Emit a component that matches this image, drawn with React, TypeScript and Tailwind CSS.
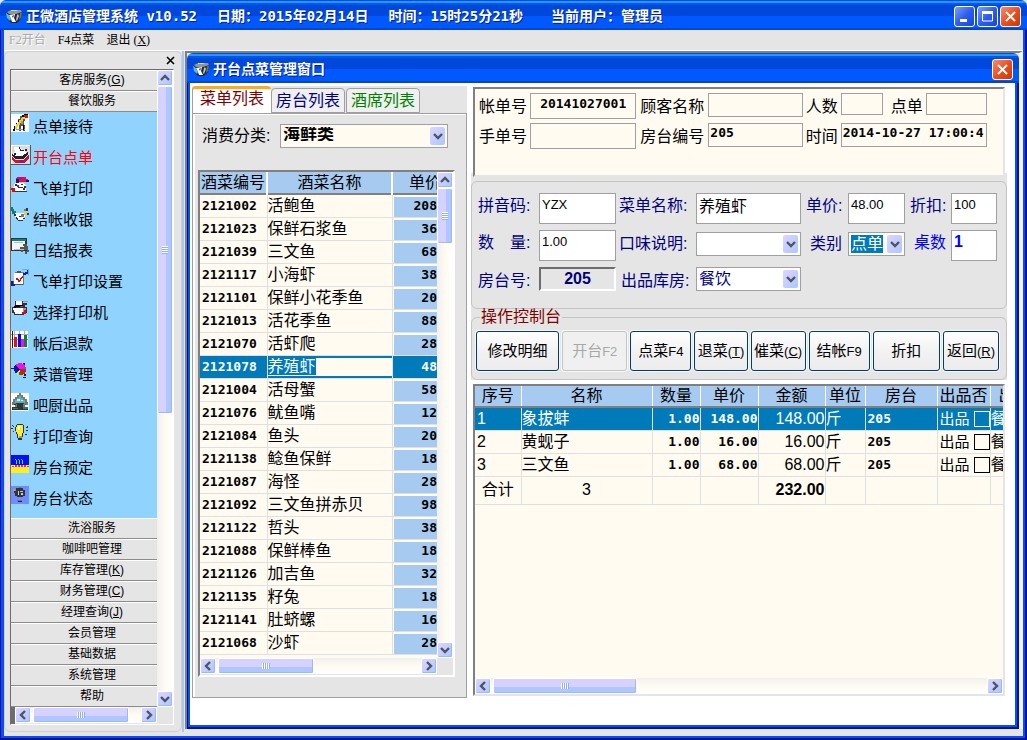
import type { ReactNode } from "react";
import clsx from "clsx";

type Dish = { code: string; name: string; price: string };
type OrderLine = { no: number; name: string; qty: string; price: string; amount: string };

const DISHES: Dish[] = [
  { code: "2121002", name: "活鲍鱼", price: "208" },
  { code: "2121023", name: "保鲜石浆鱼", price: "36" },
  { code: "2121039", name: "三文鱼", price: "68" },
  { code: "2121117", name: "小海虾", price: "38" },
  { code: "2121101", name: "保鲜小花季鱼", price: "20" },
  { code: "2121013", name: "活花季鱼", price: "88" },
  { code: "2121070", name: "活虾爬", price: "28" },
  { code: "2121078", name: "养殖虾", price: "48" },
  { code: "2121004", name: "活母蟹", price: "58" },
  { code: "2121076", name: "鱿鱼嘴", price: "12" },
  { code: "2121084", name: "鱼头", price: "20" },
  { code: "2121138", name: "鲶鱼保鲜", price: "18" },
  { code: "2121087", name: "海怪", price: "28" },
  { code: "2121092", name: "三文鱼拼赤贝", price: "98" },
  { code: "2121122", name: "哲头", price: "38" },
  { code: "2121088", name: "保鲜棒鱼", price: "18" },
  { code: "2121126", name: "加吉鱼", price: "32" },
  { code: "2121135", name: "籽兔", price: "18" },
  { code: "2121141", name: "肚蛴螺", price: "16" },
  { code: "2121068", name: "沙虾", price: "28" },
];

const ORDER: OrderLine[] = [
  { no: 1, name: "象拔蚌", qty: "1.00", price: "148.00", amount: "148.00" },
  { no: 2, name: "黄蚬子", qty: "1.00", price: "16.00", amount: "16.00" },
  { no: 3, name: "三文鱼", qty: "1.00", price: "68.00", amount: "68.00" },
];

const SELECTED_CODE = "2121078";

const ICONS: Record<string, ReactNode> = {
  waiter: (
    <>
      <path fill="#fff" d="M0 0h18v18H0z" />
      <path fill="#555" d="M9 2h3v2h2v3h-1v4h1v6h-2v-5h-2v5H8v-6h1V7H7V5h2z" />
      <path fill="#999" d="M10 5h2v5h-2zM5 15h9v1H5z" />
      <path fill="#000" d="M13 0h4v1h-4zM11 1h2v2h-2zM7 6h1v2H7zM5 9h1v2H5zM3 12h1v3H3zM2 15h2v2H2zM12 11h1v5h-1z" />
      <path fill="#f4d020" d="M11 3h3v2h-2v2h-2v2H9v2H7v2H6v2H4v-3h1v-2h2V8h1V6h2V4h1z" />
      <path fill="#e01010" d="M13 1h4v3h-3V3h-1z" />
    </>
  ),
  order: (
    <>
      <path fill="#dcdcdc" d="M0 0h20v20H0z" />
      <path fill="#fff" d="M0 0h20v1H0zM0 0h1v20H0z" />
      <path fill="#555" d="M19 0h1v20h-1zM0 19h20v1H0z" />
      <path fill="#fff" d="M3 2h5l3 3h3l1 3-4 4H4L1 9l3-2z" />
      <path fill="#222" d="M8 2h1l1 3h3v1H9zM3 8h2v2H3zM14 4h2v2h-2zM5 11h6l6-4v3l-5 4H4l-3-3V9z" />
      <path fill="#9a1090" d="M1 12l4 3h7l6-5v3l-5 5H5l-4-3z" />
      <path fill="#e01020" d="M1 13l4 2h4v3H5l-4-3zM12 15l5-4v3l-4 3z" />
      <path fill="#fff" d="M6 8h5v1H6zM7 10h3v1H7z" />
    </>
  ),
  courier: (
    <>
      <path fill="#e01050" d="M6 1h9v2h2v3H8V4H5V2z" />
      <path fill="#b01090" d="M8 1h4v2H8z" />
      <path fill="#102070" d="M5 3h3v4H5zM15 4h3v2h-3z" />
      <path fill="#fff" d="M4 7h8l3 3v6H5l-3-3z" />
      <path fill="#333" d="M4 8h2v2H4zM10 8h2v1h-2zM7 11h5v1H7zM13 10h2v2h-2zM4 15h12v1H4zM12 12h2v2h-2z" />
      <path fill="#d01010" d="M0 12h4v4H1zM6 9h2v2H6z" />
    </>
  ),
  cash: (
    <>
      <path fill="#0a7f80" d="M0 0h2v2h1v2h2v2h1v3H3V7H1V4H0z" />
      <path fill="#fff" d="M4 6h10v3l-2 4H7L4 10z" />
      <path fill="#333" d="M3 7h2v2H3zM5 10h1v1h1v2H6zM7 13h5v1H7zM12 11h2v1h-2zM8 9h2v1H8z" />
      <path fill="#777" d="M10 7h3v3h-3zM13 2h2v4h-2z" />
      <path fill="#e8d030" d="M13 4h3v4h-3z" />
      <path fill="#20308c" d="M15 1h2v3h-2zM16 6h2v2h-2z" />
    </>
  ),
  report: (
    <>
      <path fill="#333" d="M0 0h16v13H0z" />
      <path fill="#108080" d="M1 1h14v2H1z" />
      <path fill="#f4f4f4" d="M1 3h13v9H1z" />
      <path fill="#bbb" d="M3 4h9v1H3zM3 11h11v1H3z" />
      <path fill="#555" d="M9 9h5v2H9zM12 6h4v2h-4zM13 8h4v4h-4zM10 12h2v2h-2zM14 13h2v3h-2zM16 12h2v2h-2z" />
    </>
  ),
  setting: (
    <>
      <path fill="#777" d="M4 3h9v13H4z" />
      <path fill="#fff" d="M3 4h9v11H3z" />
      <path fill="#555" d="M6 2h4v2H6zM3 15h9v1H3zM2 12h1v3H2z" />
      <path fill="#d01010" d="M5 9h2v1h1v1h1V9h1V8h1V7h1v2h-1v1h-1v2H9v1H7v-2H5z" />
      <path fill="#102090" d="M12 4h2V3h2V1h2v2h-1v2h-2v1h-3zM0 12h2v3h2v2H0z" />
      <path fill="#6ba8ff" d="M11 0h7v1h-7zM17 0h1v6h-1z" />
    </>
  ),
  printer: (
    <>
      <path fill="#333" d="M4 1h8v2h4v2h-2v2h2v6h-3v2H3v-2H1V7h3z" />
      <path fill="#fff" d="M5 1h6v4H5zM2 8h10v4H3zM4 12h7v2H4z" />
      <path fill="#999" d="M12 8h3v4h-3zM12 1h5v1h-5z" />
      <path fill="#000" d="M4 5h8v2H4zM3 6h2v2H3z" />
      <path fill="#d010a0" d="M9 6h3v1H9z" />
      <path fill="#d01020" d="M11 12h4v2h-4zM13 10h2v2h-2z" />
    </>
  ),
  bars: (
    <>
      <path fill="#fff" d="M0 0h17v17H0z" />
      <path fill="#aaa" d="M0 3h17v1H0zM3 0h1v6H3zM8 0h1v3H8zM13 0h1v4h-1zM0 8h17v1H0z" />
      <path fill="#222" d="M1 0h1v17H1z" />
      <path fill="#e81010" d="M3 6h3v10H3z" />
      <path fill="#0010e8" d="M7 3h3v13H7z" />
      <path fill="#f010f0" d="M10 8h3v8h-3z" />
      <path fill="#108030" d="M13 4h3v12h-3z" />
    </>
  ),
  pie: (
    <>
      <circle cx="9" cy="7" r="6" fill="#f010f0" />
      <path fill="#0010e0" d="M9 7L4 3a6 6 0 0 0-1 5l2 4z" />
      <path fill="#f0e010" d="M9 7l-4 5 2 1h3z" />
      <path fill="#e01020" d="M9 7l2 6a6 6 0 0 0 4-4z" />
      <path fill="#108020" d="M9 7l-1 6h3zM9 7l6 2V7z" />
      <path fill="#222" d="M0 6h4v1H0zM4 3h1v1h1v1h1v1h1v1H6V6H5V5H4zM12 1h2v2h-1zM13 12h2v2h-2zM12 15h3v1h-3z" />
    </>
  ),
  kitchen: (
    <>
      <path fill="#fff" d="M0 0h18v18H0z" />
      <path fill="#777" d="M8 0h2v2h2v2h2v2h2v3h1v3h-3v2H4v-2H1V9h1V6h2V4h2V2h2z" />
      <path fill="#58b4b8" d="M8 3h2v2h2v2h2v3H4V7h2V5h2z" />
      <path fill="#c8f0f0" d="M6 6h3v2H6zM10 7h2v1h-2z" />
      <path fill="#333" d="M5 10h8v1H5zM6 11h6v3H6zM1 14h16v3H1zM3 11h2v1H3z" />
      <path fill="#108080" d="M2 15h5v1H2zM12 14h5v2h-5z" />
    </>
  ),
  bulb: (
    <>
      <path fill="#333" d="M6 0h6v1H6zM5 1h1v2H5zM12 1h1v8h-1zM4 3h1v4H4zM5 7h1v3H5zM6 10h1v4H6zM11 9h1v4h-1zM7 14h4v2H7zM1 1h1v1h1v1H2V2H1zM2 7h1v1H2zM0 4h2v1H0zM15 3h1V2h1v2h-2zM15 6h2v1h-2zM14 10h2v1h-2z" />
      <path fill="#f8f020" d="M6 1h6v7l-1 2v3H7v-3L5 7V3h1z" />
      <path fill="#fff" d="M7 2h2v4H7z" />
      <path fill="#999" d="M8 12h3v2H8z" />
    </>
  ),
  banquet: (
    <>
      <path fill="#0010f0" d="M0 0h18v10H0z" />
      <path fill="#f8f020" d="M0 10h18v8H0z" />
      <path fill="#50e0ff" d="M5 5h1v4H5zM8 5h1v4H8zM11 5h1v4h-1zM4 4h1v1H4zM7 4h1v1H7zM10 4h1v1h-1z" />
      <path fill="#f010c0" d="M1 11h2v1H1zM4 10h2v2H4zM7 10h2v2H7zM10 10h2v2h-2zM13 10h2v2h-2zM16 11h2v1h-2z" />
    </>
  ),
  pot: (
    <>
      <path fill="#6c8cff" d="M0 0h18v18H0z" />
      <path fill="#333" d="M5 2h7v2h2v6h-2v1H6v-1H4V7H3V5h2z" />
      <path fill="#ccc" d="M7 5h1v4H7zM9 5h3v1H9zM10 7h2v2h-2z" />
      <path fill="#e0a020" d="M2 3h2v2H2z" />
      <path fill="#777" d="M8 1h2v1H8zM6 14h5v1H6z" />
      <path fill="#222" d="M7 15h4v1H7z" />
    </>
  ),
};

const MENU_ITEMS = [
  { icon: "waiter", label: "点单接待" },
  { icon: "order", label: "开台点单", active: true },
  { icon: "courier", label: "飞单打印" },
  { icon: "cash", label: "结帐收银" },
  { icon: "report", label: "日结报表" },
  { icon: "setting", label: "飞单打印设置" },
  { icon: "printer", label: "选择打印机" },
  { icon: "bars", label: "帐后退款" },
  { icon: "pie", label: "菜谱管理" },
  { icon: "kitchen", label: "吧厨出品" },
  { icon: "bulb", label: "打印查询" },
  { icon: "banquet", label: "房台预定" },
  { icon: "pot", label: "房台状态" },
];

function Logo() {
  return (
    <svg width="16" height="16" viewBox="0 0 16 16" className="shrink-0" aria-hidden="true">
      <path d="M1 4l4-2h10l1 3-1 6-4 4H5l-3-3z" fill="#23282c" />
      <path d="M1 4l4-2h10l1 2-6 2H3z" fill="#8d979e" />
      <path d="M5 2h7l-2 1H5z" fill="#d4dadd" />
      <path d="M3 7l6-1-1 4 2 4H6l-1-3z" fill="#fff" />
      <path d="M0 5l3 2 2 4-1 2-3-3z" fill="#58b8e0" />
      <path d="M6 8l2-1-1 3z" fill="#23282c" />
      <path d="M11 7l1-1 1 2-2 5-1-1z" fill="#b8c4ca" />
      <path d="M14 5l2 0-1 5-2 2z" fill="#68737a" />
    </svg>
  );
}

type WinButtonProps = { kind: "min" | "max" | "close"; label: string };

function WinButton({ kind, label }: WinButtonProps) {
  return (
    <button
      type="button"
      aria-label={label}
      className={clsx(
        "flex h-5.25 w-5.25 items-center justify-center rounded-[3px] border border-white",
        kind === "close"
          ? "bg-linear-to-br from-[#f08a68] via-[#f04d1c] to-[#c43a08]"
          : "bg-linear-to-br from-[#7f9df8] via-[#2f5cf0] to-[#1a45dc]",
      )}
    >
      <svg width="17" height="17" viewBox="0 0 17 17" fill="none" stroke="#fff" aria-hidden="true">
        {kind === "min" && <path d="M4 12.5h7" strokeWidth="3" />}
        {kind === "max" && (
          <>
            <path d="M3.5 4h10v9h-10z" />
            <path d="M3 4.5h11" strokeWidth="3" />
          </>
        )}
        {kind === "close" && <path d="M4 4l9 9M13 4l-9 9" strokeWidth="2" />}
      </svg>
    </button>
  );
}

function TitleBar({ children, buttons }: { children: ReactNode; buttons: ReactNode }) {
  return (
    <header className="flex h-7.5 shrink-0 items-center justify-between rounded-t-md bg-[linear-gradient(180deg,#0a48d8_0_1px,#1c9cff_1px_3px,#0855e8_3px_5px,#0048dc_5px_16px,#0058ff_16px_28px,#0048d0_28px)] pt-0.5 pr-1.5 pl-1.5">
      <div className="flex items-center gap-1 font-['DejaVu_Sans_Mono','Noto_Sans_CJK_SC',monospace] text-sm leading-5 font-bold whitespace-nowrap text-white [text-shadow:1px_1px_#00208c]">
        <Logo />
        {children}
      </div>
      <div className="flex gap-0.5">{buttons}</div>
    </header>
  );
}

type Dir = "up" | "down" | "left" | "right";

const CHEVRONS: Record<Dir, string> = {
  up: "M3 9l4-4 4 4",
  down: "M3 5l4 4 4-4",
  left: "M9 3L5 7l4 4",
  right: "M5 3l4 4-4 4",
};

function Chevron({ dir }: { dir: Dir }) {
  return (
    <svg width="14" height="14" viewBox="0 0 14 14" fill="none" stroke="#4d5560" strokeWidth="2.4" aria-hidden="true">
      <path d={CHEVRONS[dir]} />
    </svg>
  );
}

function ScrollButton({ dir }: { dir: Dir }) {
  return (
    <button
      type="button"
      aria-label={"scroll " + dir}
      className="flex h-4 w-4 shrink-0 items-center justify-center rounded-xs border border-white bg-linear-to-br from-[#dcd6ff] to-[#adc6ff] shadow-[inset_-1px_-1px_#9bb8f8]"
    >
      <Chevron dir={dir} />
    </button>
  );
}

function VScroll({ thumb }: { thumb: string }) {
  return (
    <div className="flex w-4 shrink-0 flex-col bg-linear-to-r from-[#f0f0f0] via-[#fffbf0] to-white">
      <ScrollButton dir="up" />
      <div className="min-h-0 flex-1">
        <div
          className={clsx(
            "flex items-center justify-center rounded-xs border border-white bg-[linear-gradient(90deg,#d5d2ff_60%,#b0c6ff_60%)] shadow-[inset_-1px_-1px_#9bb8f8]",
            thumb,
          )}
        >
          <span className="h-2 w-1.5 bg-[repeating-linear-gradient(180deg,#fff_0_1px,#8fb0f8_1px_2px)]" />
        </div>
      </div>
      <ScrollButton dir="down" />
    </div>
  );
}

function HScroll({ thumb }: { thumb: string }) {
  return (
    <div className="flex h-4 min-w-0 flex-1 bg-linear-to-b from-[#f0f0f0] via-[#fffbf0] to-white">
      <ScrollButton dir="left" />
      <div className="min-w-0 flex-1 pl-0.5">
        <div
          className={clsx(
            "flex h-4 items-center justify-center rounded-xs border border-white bg-[linear-gradient(180deg,#d5d2ff_60%,#b0c6ff_60%)] shadow-[inset_-1px_-1px_#9bb8f8]",
            thumb,
          )}
        >
          <span className="h-1.5 w-2 bg-[repeating-linear-gradient(90deg,#fff_0_1px,#8fb0f8_1px_2px)]" />
        </div>
      </div>
      <ScrollButton dir="right" />
    </div>
  );
}

function GroupHeader({ label, hotkey }: { label: string; hotkey?: string }) {
  return (
    <button
      type="button"
      className="block h-5.25 w-full shrink-0 border-t border-b border-t-white border-b-[#8c8c8c] bg-[#e5e5e5] pl-4 text-center text-xs leading-4.75 text-black"
    >
      {label}
      {hotkey && (
        <>
          (<u>{hotkey}</u>)
        </>
      )}
    </button>
  );
}

function Sidebar() {
  return (
    <aside className="mb-1 flex w-44.5 shrink-0 flex-col rounded-md border border-[#cfcfcf] bg-[#e5e5e5] pr-1.75 pb-1.5 pl-1.25">
      <div className="-mr-1 flex h-4.25 items-center justify-end">
        <button type="button" aria-label="关闭" className="h-3 w-3">
          <svg width="9" height="9" viewBox="0 0 9 9" stroke="#000" strokeWidth="1.6" aria-hidden="true">
            <path d="M1 1l7 7M8 1L1 8" />
          </svg>
        </button>
      </div>
      <div className="flex min-h-0 flex-1 flex-col border border-t-[#6d6d6d] border-r-white border-b-white border-l-[#6d6d6d]">
        <div className="flex min-h-0 flex-1">
          <nav className="flex min-w-0 flex-1 flex-col overflow-hidden">
            <GroupHeader label="客房服务" hotkey="G" />
            <GroupHeader label="餐饮服务" />
            <ul className="min-h-0 flex-1 overflow-hidden bg-[#90d3ff]">
              {MENU_ITEMS.map((item) => (
                <li key={item.label}>
                  <button
                    type="button"
                    className={clsx("flex h-7.75 w-full text-left", item.active ? "gap-0.5" : "gap-1")}
                  >
                    <svg
                      width={item.active ? 20 : 18}
                      height={item.active ? 20 : 18}
                      viewBox={item.active ? "0 0 20 20" : "0 0 18 18"}
                      shapeRendering="crispEdges"
                      className="mt-0.5 shrink-0"
                      aria-hidden="true"
                    >
                      {ICONS[item.icon]}
                    </svg>
                    <span
                      className={clsx(
                        "text-[15px] leading-7.5 whitespace-nowrap",
                        item.active ? "text-[#ff0000]" : "text-black",
                      )}
                    >
                      {item.label}
                    </span>
                  </button>
                </li>
              ))}
            </ul>
            <GroupHeader label="洗浴服务" />
            <GroupHeader label="咖啡吧管理" />
            <GroupHeader label="库存管理" hotkey="K" />
            <GroupHeader label="财务管理" hotkey="C" />
            <GroupHeader label="经理查询" hotkey="J" />
            <GroupHeader label="会员管理" />
            <GroupHeader label="基础数据" />
            <GroupHeader label="系统管理" />
            <GroupHeader label="帮助" />
          </nav>
          <VScroll thumb="h-82" />
        </div>
        <div className="flex h-4.25">
          <div className="w-1 bg-[#6d6d6d]" />
          <HScroll thumb="w-24" />
          <div className="w-4" />
        </div>
      </div>
    </aside>
  );
}

type SelectProps = { id: string; value: string; className?: string; selectClass?: string };

function Select({ id, value, className, selectClass }: SelectProps) {
  return (
    <div className={clsx("flex h-6 min-w-0 items-stretch border border-[#a0a0a4] p-0.5", className)}>
      <select
        id={id}
        defaultValue={value}
        className={clsx("min-w-0 flex-1 appearance-none leading-4 outline-none", selectClass)}
      >
        <option>{value}</option>
      </select>
      <span className="pointer-events-none flex w-3.75 items-center justify-center rounded-xs bg-linear-to-br from-[#dcd6ff] to-[#adc6ff]">
        <Chevron dir="down" />
      </span>
    </div>
  );
}

function DishGrid() {
  return (
    <div className="flex min-h-0 flex-1 flex-col border-2 border-t-[#808080] border-r-white border-b-white border-l-[#808080] bg-[#e5e5e5]">
      <div className="flex min-h-0 flex-1">
        <div className="min-w-0 flex-1 overflow-hidden bg-[#fffbf0]">
          <table className="w-full table-fixed border-collapse">
            <colgroup>
              <col className="w-16.75" />
              <col className="w-31.25" />
              <col />
            </colgroup>
            <thead>
              <tr className="h-5.5 border-b-2 border-[#808080] bg-[#a6caf0] text-base leading-5 whitespace-nowrap">
                <th className="border-r-2 border-r-white p-0 font-normal">酒菜编号</th>
                <th className="border-r-2 border-r-white p-0 font-normal">酒菜名称</th>
                <th className="overflow-hidden p-0 pl-4 text-left font-normal">单价</th>
              </tr>
            </thead>
            <tbody>
              {DISHES.map((dish) => {
                const selected = dish.code === SELECTED_CODE;
                return (
                  <tr key={dish.code} className="h-5.75 border-b border-[#e0e0e0] leading-5 whitespace-nowrap">
                    <td
                      className={clsx(
                        "border-r border-[#e0e0e0] p-0 pl-0.5 font-['DejaVu_Sans_Mono',monospace] text-[13px] font-bold",
                        selected && "bg-[#007ab8] text-white",
                      )}
                    >
                      {dish.code}
                    </td>
                    <td
                      className={clsx(
                        "border-r border-[#e0e0e0] p-0 text-base leading-5",
                        selected && "shadow-[inset_0_2px_#007ab8,inset_0_-2px_#007ab8]",
                      )}
                    >
                      <span className={clsx(selected && "bg-[#007ab8] text-white")}>{dish.name}</span>
                    </td>
                    <td
                      className={clsx(
                        "p-0 text-right font-['DejaVu_Sans_Mono',monospace] text-[13px] font-bold",
                        selected
                          ? "bg-[#007ab8] text-white"
                          : "bg-[#a6caf0] shadow-[inset_1px_2px_#fffbf0]",
                      )}
                    >
                      {dish.price}
                    </td>
                  </tr>
                );
              })}
            </tbody>
          </table>
        </div>
        <VScroll thumb="h-14" />
      </div>
      <div className="flex h-4.25">
        <HScroll thumb="w-24" />
        <div className="w-4" />
      </div>
    </div>
  );
}

function DishPanel() {
  return (
    <section className="mt-0.75 mb-6.75 ml-0.5 flex w-68.75 shrink-0 flex-col bg-[#e5e5e5]">
      <div className="flex h-6.75 shrink-0 items-end text-base leading-5 whitespace-nowrap">
        <button
          type="button"
          className="h-6.75 w-19.75 rounded-t-sm border-t-3 border-l border-t-[#ffa820] border-l-[#a0a0a4] bg-white pb-1 text-[#800000]"
        >
          菜单列表
        </button>
        <button
          type="button"
          className="h-6.25 w-18.5 rounded-t-sm border border-[#a0a0a4] bg-[#f0f0f0] text-[#000080]"
        >
          房台列表
        </button>
        <button
          type="button"
          className="ml-px h-6.25 w-18.5 rounded-t-sm border border-[#a0a0a4] bg-[#f0f0f0] text-[#008000]"
        >
          酒席列表
        </button>
      </div>
      <div className="flex min-h-0 flex-1 flex-col border border-[#a0a0a4] bg-[#e5e5e5] px-1.25 pb-5 shadow-[inset_2px_1px_#fff]">
        <div className="flex shrink-0 items-start pt-2.5 pb-5.5">
          <label htmlFor="category" className="w-20.5 pl-1 text-base leading-6 whitespace-nowrap">
            消费分类:
          </label>
          <Select
            id="category"
            value="海鲜类"
            className="w-42 bg-[#fffbf0]"
            selectClass="bg-[#fffbf0] pb-1 text-[17px] font-bold"
          />
        </div>
        <div className="mr-1.5 flex min-h-0 flex-1 flex-col">
          <DishGrid />
        </div>
      </div>
    </section>
  );
}

type FieldProps = {
  id: string;
  label: string;
  value?: string;
  labelClass?: string;
  inputClass?: string;
};

function BillField({ id, label, value = "", labelClass, inputClass }: FieldProps) {
  return (
    <>
      <label htmlFor={id} className={clsx("leading-7 whitespace-nowrap", labelClass)}>
        {label}
      </label>
      <input
        id={id}
        defaultValue={value}
        className={clsx(
          "w-full min-w-0 border border-[#a0a0a4] bg-[#fffbf0] px-px pb-1.5 font-['DejaVu_Sans_Mono',monospace] text-[13px] font-bold outline-none",
          inputClass,
        )}
      />
    </>
  );
}

function BillInfo() {
  return (
    <div className="grid h-22.5 shrink-0 grid-cols-[48px_minmax(0,106fr)_66px_minmax(0,94fr)_32px_minmax(0,42fr)_37px_minmax(0,61fr)] content-start items-start gap-x-0.75 gap-y-0.5 border-2 border-t-[#808080] border-r-[#e5e5e5] border-b-[#e5e5e5] border-l-[#808080] bg-[#fffbf0] pt-1 pr-4 pl-1 text-base">
      <BillField id="bill-no" label="帐单号" value="20141027001" inputClass="h-6.5 text-center" />
      <BillField id="guest" label="顾客名称" labelClass="pl-px" inputClass="h-6" />
      <BillField id="people" label="人数" inputClass="h-5.5" />
      <BillField id="waiter" label="点单" labelClass="text-right" inputClass="h-5.5" />
      <BillField id="manual-no" label="手单号" inputClass="h-6.5" />
      <BillField id="room-no" label="房台编号" value="205" labelClass="pl-px" inputClass="h-6" />
      <BillField id="time" label="时间" value="2014-10-27 17:00:4" inputClass="col-span-3 h-6" />
    </div>
  );
}

function EntryField({ id, label, value = "", labelClass, inputClass }: FieldProps) {
  return (
    <>
      <label htmlFor={id} className={clsx("leading-6.5 whitespace-nowrap", labelClass)}>
        {label}
      </label>
      <input
        id={id}
        defaultValue={value}
        className={clsx("h-7.75 w-full min-w-0 border border-[#a0a0a4] bg-white px-0.5 pb-2 outline-none", inputClass)}
      />
    </>
  );
}

function DishEntry() {
  return (
    <div className="mt-1 grid h-32 shrink-0 grid-cols-[58px_minmax(0,77fr)_74px_minmax(0,105fr)_41px_minmax(0,57fr)_40px_minmax(0,46fr)] content-start items-start gap-x-0.75 gap-y-1.5 rounded-md border border-[#c4c4c4] bg-[#e5e5e5] pt-2.75 pr-2.25 pl-1.5 text-base text-[#000080]">
      <EntryField id="pinyin" label="拼音码:" value="YZX" inputClass="text-[13px] text-black" />
      <EntryField id="dish-name" label="菜单名称:" value="养殖虾" inputClass="text-black" />
      <EntryField id="price" label="单价:" value="48.00" labelClass="pl-0.5" inputClass="text-[13px] text-black" />
      <EntryField id="discount" label="折扣:" value="100" labelClass="pl-0.5" inputClass="text-[13px] text-black" />

      <EntryField id="qty" label="数　量:" value="1.00" inputClass="text-[13px] text-black" />
      <label htmlFor="taste" className="leading-7 whitespace-nowrap">
        口味说明:
      </label>
      <Select id="taste" value="" className="mt-0.5 bg-white" selectClass="bg-white" />
      <label htmlFor="kind" className="pl-1.5 leading-7 whitespace-nowrap">
        类别
      </label>
      <Select
        id="kind"
        value="点单"
        className="mt-0.5 bg-white"
        selectClass="mr-1 bg-[#007ab8] text-white"
      />
      <EntryField
        id="tables"
        label="桌数"
        value="1"
        labelClass="pl-1.5 text-[#0000ff]"
        inputClass="font-bold text-[#0000ff]"
      />

      <label htmlFor="room" className="leading-7 whitespace-nowrap">
        房台号:
      </label>
      <input
        id="room"
        readOnly
        defaultValue="205"
        className="h-6 w-full min-w-0 border-2 border-t-[#6d6d6d] border-r-white border-b-white border-l-[#6d6d6d] bg-[#e5e5e5] text-center font-bold outline-none"
      />
      <label htmlFor="store" className="pl-0.5 leading-7 whitespace-nowrap">
        出品库房:
      </label>
      <Select id="store" value="餐饮" className="bg-white" selectClass="bg-white" />
    </div>
  );
}

type ActionProps = { label: string; suffix?: string; hotkey?: string; disabled?: boolean };

function Action({ label, suffix, hotkey, disabled }: ActionProps) {
  return (
    <button
      type="button"
      disabled={disabled}
      className={clsx(
        "h-10 min-w-0 rounded-[3px] border text-[15px] leading-5 whitespace-nowrap shadow-[0_0_0_1px_#f8f8f8]",
        disabled
          ? "border-[#c4c4c4] bg-[#f0f0f0] text-[#a8a8a8]"
          : "border-[#003c74] bg-linear-to-b from-white via-[#f2f2f2] to-[#ececec] text-black",
      )}
    >
      {label}
      {suffix && <span className="text-[13px]">{suffix}</span>}
      {hotkey && (
        <span className="text-[13px]">
          (<u>{hotkey}</u>)
        </span>
      )}
    </button>
  );
}

function Console() {
  return (
    <fieldset className="min-w-0 shrink-0 rounded-md border border-[#c4c4c4] pr-1.75 pb-2 pl-1">
      <legend className="ml-1 px-px text-base leading-4 text-[#800000]">操作控制台</legend>
      <div className="mt-1.5 grid grid-cols-[83fr_65fr_61fr_53fr_55fr_61fr_67fr_56fr] gap-0.75">
        <Action label="修改明细" />
        <Action label="开台" suffix="F2" disabled />
        <Action label="点菜" suffix="F4" />
        <Action label="退菜" hotkey="T" />
        <Action label="催菜" hotkey="C" />
        <Action label="结帐" suffix="F9" />
        <Action label="折扣" />
        <Action label="返回" hotkey="R" />
      </div>
    </fieldset>
  );
}

const HEAD_CELL = "overflow-hidden border-r border-white p-0 font-normal";
const CELL = "overflow-hidden border-r border-[#e0e0e0] p-0";
const MONO_CELL =
  "overflow-hidden border-r border-[#e0e0e0] p-0 font-['DejaVu_Sans_Mono',monospace] text-[13px] font-bold";

function OrderGrid() {
  return (
    <div className="flex h-78 shrink-0 flex-col border-2 border-t-[#808080] border-r-[#e5e5e5] border-b-[#e5e5e5] border-l-[#808080] bg-[#fffbf0]">
      <div className="min-h-0 flex-1 overflow-hidden">
        <table className="w-full table-fixed border-collapse text-base leading-5 whitespace-nowrap">
          <colgroup>
            <col className="w-11.5" />
            <col />
            <col className="w-12" />
            <col className="w-14.5" />
            <col className="w-16.75" />
            <col className="w-10" />
            <col className="w-18" />
            <col className="w-13.25" />
            <col className="w-3.25" />
          </colgroup>
          <thead>
            <tr className="h-5 border-b-2 border-[#808080] bg-[#a6caf0]">
              <th className={HEAD_CELL}>序号</th>
              <th className={HEAD_CELL}>名称</th>
              <th className={HEAD_CELL}>数量</th>
              <th className={HEAD_CELL}>单价</th>
              <th className={HEAD_CELL}>金额</th>
              <th className={HEAD_CELL}>单位</th>
              <th className={HEAD_CELL}>房台</th>
              <th className={HEAD_CELL}>出品否</th>
              <th className="overflow-hidden p-0 pl-2 text-left font-normal">出</th>
            </tr>
          </thead>
          <tbody>
            {ORDER.map((line, i) => (
              <tr
                key={line.no}
                className={clsx("h-5.75 border-b border-[#e0e0e0]", i === 0 && "bg-[#007ab8] text-white")}
              >
                <td className={clsx(CELL, "pl-0.5")}>{line.no}</td>
                <td className={CELL}>{line.name}</td>
                <td className={clsx(MONO_CELL, "text-right")}>{line.qty}</td>
                <td className={clsx(MONO_CELL, "text-right")}>{line.price}</td>
                <td className={clsx(CELL, "text-right")}>{line.amount}</td>
                <td className={CELL}>斤</td>
                <td className={clsx(MONO_CELL, "pl-0.5")}>205</td>
                <td className={CELL}>
                  <label className="flex items-center justify-between pl-0.5 text-[15px]">
                    出品
                    <input
                      type="checkbox"
                      className={clsx(
                        "h-4 w-4 shrink-0 appearance-none border",
                        i === 0 ? "border-white" : "border-black",
                      )}
                    />
                  </label>
                </td>
                <td className="overflow-hidden p-0">餐</td>
              </tr>
            ))}
            <tr className="h-7 border-b border-[#e0e0e0]">
              <td className={clsx(CELL, "text-center")}>合计</td>
              <td className={clsx(CELL, "text-center")}>3</td>
              <td className={CELL} />
              <td className={CELL} />
              <td className={clsx(CELL, "text-right font-bold")}>232.00</td>
              <td className={CELL} />
              <td className={CELL} />
              <td className={CELL} />
              <td className="p-0" />
            </tr>
          </tbody>
        </table>
      </div>
      <div className="flex shrink-0">
        <HScroll thumb="w-36" />
      </div>
    </div>
  );
}

function OrderWindow() {
  return (
    <div className="flex min-h-0 flex-1 flex-col">
      <TitleBar buttons={<WinButton kind="close" label="关闭窗口" />}>
        <h2>开台点菜管理窗口</h2>
      </TitleBar>
      <div className="flex min-h-0 flex-1 bg-[#0450f0] pr-1 pb-1 pl-0.75 shadow-[inset_1px_-2px_#0010a0,inset_-2px_0_#0010a0]">
        <div className="flex min-h-0 min-w-0 flex-1 bg-white">
          <DishPanel />
          <div className="mt-1 mr-2 ml-1 flex min-w-0 flex-1 flex-col">
            <div className="flex flex-col bg-[linear-gradient(180deg,#fff_0_86px,#e5e5e5_86px)]">
              <div className="mx-0.5 flex flex-col">
                <BillInfo />
              </div>
              <DishEntry />
              <Console />
            </div>
            <div className="mx-0.5 mt-1">
              <OrderGrid />
            </div>
          </div>
        </div>
      </div>
    </div>
  );
}

export default function App() {
  return (
    <div className="flex h-screen min-h-185 w-full min-w-250 flex-col bg-[#e5e5e5] font-['Liberation_Sans','Noto_Sans_CJK_SC',sans-serif] text-black">
      <TitleBar
        buttons={
          <>
            <WinButton kind="min" label="最小化" />
            <WinButton kind="max" label="最大化" />
            <WinButton kind="close" label="关闭" />
          </>
        }
      >
        <h1 className="flex gap-5">
          <span>正微酒店管理系统 v10.52</span>
          <span>日期：2015年02月14日</span>
          <span>时间：15时25分21秒</span>
          <span className="pl-2">当前用户：管理员</span>
        </h1>
      </TitleBar>
      <div className="flex min-h-0 flex-1 flex-col bg-[#0450f0] px-1 pb-1 shadow-[inset_1px_-2px_#0010a0,inset_-2px_0_#0010a0]">
        <div className="flex min-h-0 flex-1 flex-col bg-[#e5e5e5]">
          <div className="flex h-5.25 shrink-0 items-center gap-3 border-b border-white pl-1.25 font-['Liberation_Serif','Noto_Sans_CJK_SC',serif] text-xs">
            <button type="button" disabled className="text-[#a8a8a8] [text-shadow:1px_1px_#fff]">
              F2开台
            </button>
            <button type="button">F4点菜</button>
            <button type="button">
              退出 (<u>X</u>)
            </button>
          </div>
          <div className="flex min-h-0 flex-1">
            <Sidebar />
            <div className="mr-px mb-1 w-0.5 shrink-0 bg-[#a8c8f0]" />
            <main className="mb-1.75 flex min-w-0 flex-1 flex-col border-t-2 border-r-4 border-l-2 border-t-[#808080] border-r-[#f4f4f4] border-l-[#808080]">
              <OrderWindow />
            </main>
          </div>
        </div>
      </div>
    </div>
  );
}
